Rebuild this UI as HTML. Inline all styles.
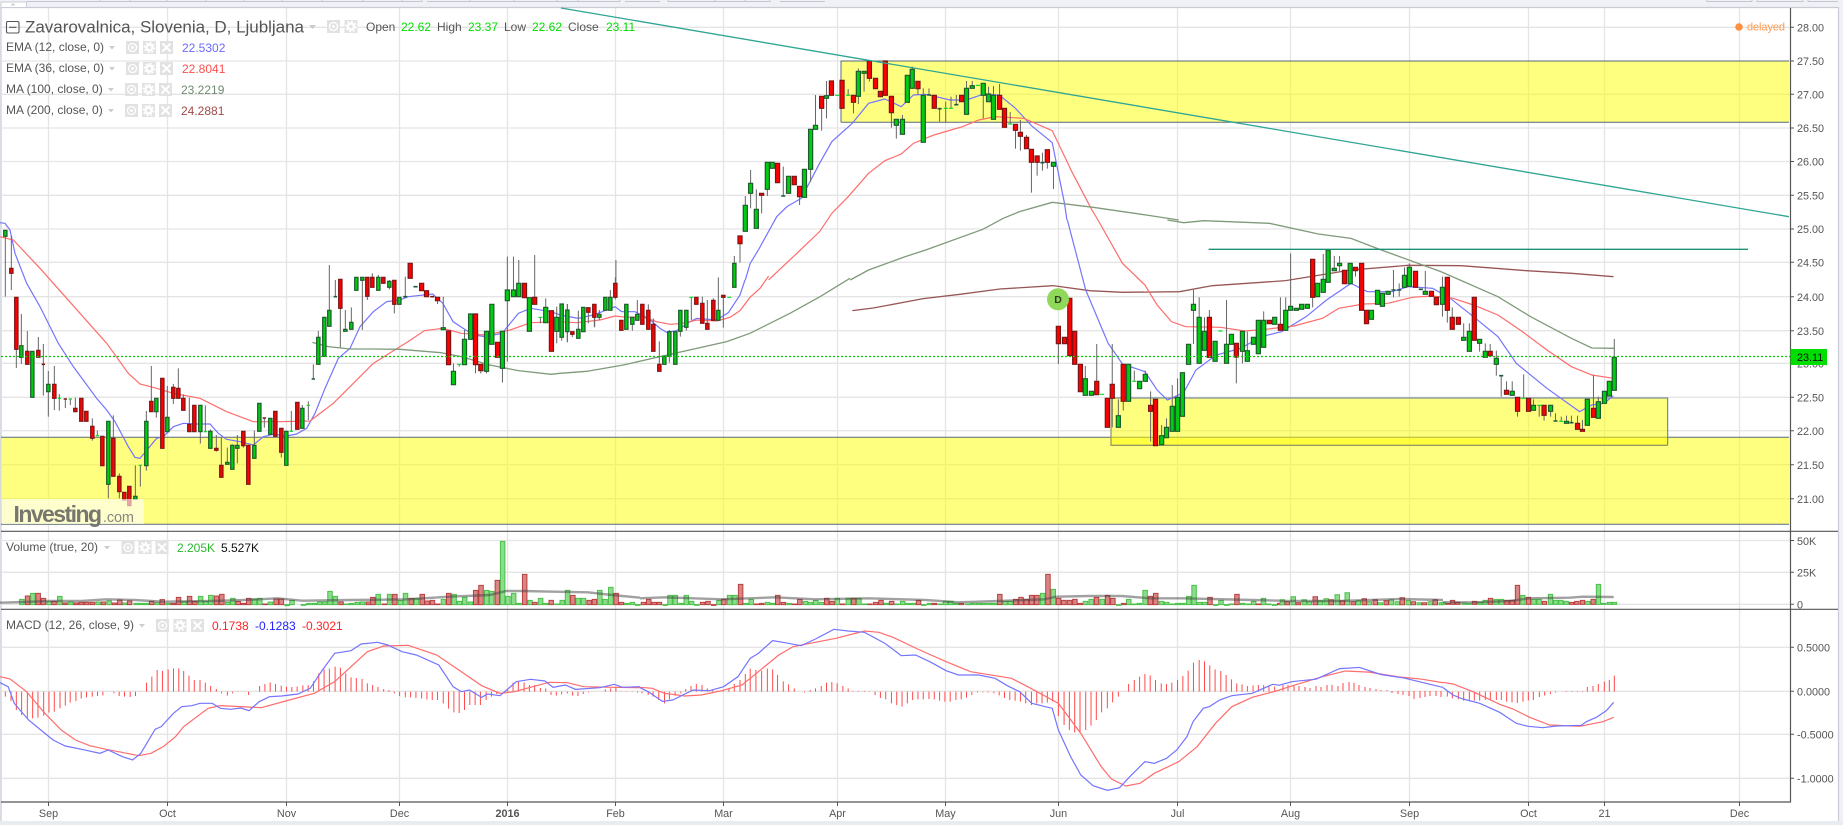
<!DOCTYPE html>
<html><head><meta charset="utf-8"><title>Zavarovalnica chart</title>
<style>
html,body{margin:0;padding:0;background:#eff1f6;overflow:hidden}
svg{display:block;font-family:"Liberation Sans",Arial,sans-serif}
svg *{vector-effect:non-scaling-stroke}
.w{fill:none;stroke:#666;stroke-width:1}
.g{fill:#0c1;stroke:#1d5a2c;stroke-width:1.2}
.r{fill:#f00;stroke:#7a1414;stroke-width:1.2}
.dg{fill:none;stroke:#0d2;stroke-width:1.2}
.dd{fill:none;stroke:#1d5a3c;stroke-width:1.6}
.dr{fill:none;stroke:#7a1414;stroke-width:1.6}
.ema1{fill:none;stroke:#7474ff;stroke-width:1.2}
.ema2{fill:none;stroke:#ff6c6c;stroke-width:1.2}
.ma1{fill:none;stroke:#7f9a7a;stroke-width:1.3}
.ma2{fill:none;stroke:#985656;stroke-width:1.3}
.vg{fill:#8cdc8c;stroke:#49c049;stroke-width:1}
.vr{fill:#da8585;stroke:#b84040;stroke-width:1}
.vm{fill:none;stroke:#444;stroke-opacity:.5;stroke-width:2.4}
.h{fill:none;stroke:#ff4a4a;stroke-width:1}
.l{font-size:12px;fill:#555}
.a{font-size:10.8px;fill:#555}
</style></head><body>
<svg width="1843" height="825" viewBox="0 0 1843 825" xmlns="http://www.w3.org/2000/svg">
<defs>
<g id="ie"><rect width="13" height="13" fill="#e2e2e2"/><circle cx="6.5" cy="6.5" r="4" fill="none" stroke="#fff" stroke-width="1.3"/><circle cx="6.5" cy="6.5" r="1.5" fill="#fff"/></g>
<g id="ig"><rect width="13" height="13" fill="#e2e2e2"/><circle cx="6.5" cy="6.5" r="3" fill="none" stroke="#fff" stroke-width="2.4"/><circle cx="6.5" cy="6.5" r="5" fill="none" stroke="#fff" stroke-width="1.6" stroke-dasharray="2 1.9"/></g>
<g id="ix"><rect width="13" height="13" fill="#e2e2e2"/><path d="M2.5 2.5L10.5 10.5M10.5 2.5L2.5 10.5" stroke="#fff" stroke-width="2"/></g>
</defs>
<rect width="1843" height="825" fill="#eff1f6"/>
<rect x="1" y="7" width="1837" height="814" fill="#fff"/>
<!-- top bar -->
<path d="M1 7.5H1838M1838.5 7V821M1 7V821" stroke="#c9ccd4" stroke-width="1.2" fill="none"/>
<rect x="1" y="2" width="25.500" height="5.500" fill="#fff" stroke="#c9ccd4"/>
<path d="M13 3l-2.500 2.500h5z" fill="#ccc"/>
<path d="M27 1.500H422M427 1.500H620M625 1.500H660M668 1.500H770M780 1.500H825M1707 1.500H1752M1757 1.500H1803M1808 1.500H1838" stroke="#c4c7cf" fill="none"/>
<path d="M100 0V2M130 0V2M167 0V2M206 0V2M244 0V2M282 0V2M322 0V2M363 0V2M402 0V2M422 0V2M470 0V2M514 0V2M557 0V2M578 0V2M620 0V2M668 0V2M715 0V2M745 0V2M770 0V2M1707 0V2M1752 0V2M1757 0V2M1803 0V2M1808 0V2" stroke="#c4c7cf" fill="none"/>
<!-- grid -->
<path d="M48.500 8V802M167.500 8V802M286.500 8V802M399.500 8V802M507.500 8V802M615.500 8V802M723.500 8V802M837.500 8V802M945.500 8V802M1058.500 8V802M1177.500 8V802M1290.500 8V802M1409.500 8V802M1528.500 8V802M1604.500 8V802M1739.500 8V802" stroke="#e5e5e5" stroke-width="1.300" fill="none"/>
<path d="M1 27.300H1790M1 61H1790M1 94.300H1790M1 128H1790M1 161.500H1790M1 195.300H1790M1 229H1790M1 262.300H1790M1 296.700H1790M1 330.700H1790M1 363.300H1790M1 397.300H1790M1 430.700H1790M1 464.700H1790M1 498.700H1790M1 540.500H1790M1 572.300H1790M1 604.300H1790M1 647.300H1790M1 691.300H1790M1 734.300H1790M1 778.300H1790" stroke="#e5e5e5" stroke-width="1.300" fill="none"/>
<!-- zones -->
<rect x="841" y="61" width="948" height="61.300" fill="#ff0" fill-opacity=".5"/>
<path d="M841 122.300V61H1789M841 122.300H1789" fill="none" stroke="#5a6c7a" stroke-width="1"/>
<rect x="1" y="437.300" width="1788" height="87" fill="#ff0" fill-opacity=".5"/>
<path d="M1 437.300H1789M1 524.300H1789" fill="none" stroke="#5a6c7a" stroke-width="1"/>
<rect x="1111" y="398" width="556.700" height="47.300" fill="#ff0" fill-opacity=".5"/>
<path d="M1111 398H1667.700V445.300" fill="none" stroke="#5f7590" stroke-width="1"/>
<path d="M1111 398V445.300H1667.700" fill="none" stroke="#9a9a60" stroke-width="1.300"/>
<!-- moving averages -->
<g transform="translate(0,220) scale(.33333)">
<polyline class="ema1" points="0,8 15,10 30,30 45,100 80,190 120,260 175,370 220,440 290,535 320,570 345,605 385,680 405,712 420,715 445,685 470,655 490,650 520,620 550,610 590,612 630,612 655,640 680,658 720,665 760,675 790,650 820,643 860,648 890,642 920,625 945,580 975,505 1015,415 1050,385 1080,320 1120,275 1160,245 1200,240"/>
<polyline class="ema2" points="0,50 40,60 120,145 200,235 280,325 320,370 385,460 420,492 470,505 520,520 600,535 680,575 760,605 840,605 930,603 1000,550 1050,500 1120,430 1200,380"/>
<polyline class="ma1" points="937,367 985,380 1050,387 1120,387 1200,388"/>
</g>
<g transform="translate(0,280) scale(.40816,.33333)">
<polyline class="ema1" points="980,60 1000,50 1060,42 1085,70 1110,125 1135,145 1160,165 1190,170 1230,160 1270,100 1300,85 1350,95 1372,105"/>
<polyline class="ema2" points="980,200 1000,185 1040,152 1085,145 1130,160 1190,165 1250,150 1300,128 1372,125"/>
<polyline class="ma1" points="980,208 1080,218 1130,230 1200,255 1270,272 1350,283 1372,280"/>
</g>
<g transform="translate(560,240) scale(.33333)">
<polyline class="ema1" points="0,225 55,235 100,225 140,210 165,200 185,215 225,215 265,235 300,265 320,277 350,272 390,245 410,235 470,240 505,218 540,165 555,120"/>
<polyline class="ema2" points="0,245 50,248 120,240 165,228 200,232 245,230 290,245 330,253 370,250 410,240 470,243 510,232 540,212 570,172 600,145 626,108"/>
<polyline class="ma1" points="0,400 80,394 190,375 300,350 500,305 570,280 690,220 780,170 870,115"/>
<polyline class="ma2" points="877,212 940,204 1090,176 1200,163 1320,147"/>
</g>
<g transform="translate(640,0) scale(.40816,.33333)">
<polyline class="ema1" points="258,840 270,790 290,750 335,650 360,620 395,595 440,490 470,425 520,370 560,310 600,297 640,320 670,285 700,283 760,300 800,300 840,283 880,285 920,325 960,378 1010,428 1040,610 1046,660"/>
<polyline class="ema2" points="315,840 380,765 440,695 470,640 510,590 560,520 600,482 640,462 670,430 720,405 790,380 830,360 870,350 940,355 1010,392 1060,520 1105,625 1122,660"/>
<polyline class="ma1" points="515,840 560,810 650,770 700,750 840,688 890,655 930,635 1010,607 1110,622 1240,645 1320,660"/>
</g>
<g transform="translate(1000,220) scale(.40816,.33333)">
<polyline class="ma2" points="0,207 130,197 220,212 300,217 440,215 520,197 700,182 860,150 1000,136 1130,137 1290,152 1400,160 1503,170"/>
<polyline class="ema1" points="165,0 210,210 265,370 300,432 355,455 385,510 410,540 450,518 480,450 530,405 590,385 640,350 690,335 750,290 800,240 860,190 900,215 960,215 1000,200 1060,205 1100,232 1160,290 1220,350 1265,430 1340,505 1420,575 1450,555 1480,550 1503,527"/>
<polyline class="ema2" points="240,0 300,130 355,195 385,255 420,305 455,320 540,322 600,333 650,328 720,318 790,295 830,265 890,252 950,250 1010,232 1060,228 1110,235 1160,255 1220,285 1280,335 1340,390 1400,440 1450,465 1503,475"/>
<polyline class="ma1" points="410,0 450,8 500,2 660,10 780,42 860,55 930,88 1080,155 1220,230 1300,290 1400,355 1450,384 1505,385"/>
</g>
<!-- candles A -->
<g transform="translate(0,220) scale(.33333)">
<path class="w" d="M16 30V230M34 48V210M49 232V444M64 282V432M82 333V433M97 394V532M115 351V412M130 372V527M145 453V590M163 438V570M178 522V572M196 535V564M211 537V555M226 533V575M277 595V662M292 632V648M325 604V835M340 586V655M358 760V835M406 736V830M421 736V800M439 573V752M454 438V544M469 535V593M502 498V592M520 492V552M535 445V535M550 523V571M568 533V613M601 635V671M616 556V635M631 628V634M649 645V695M664 652V736M682 683V727M697 673V676M712 645V730M730 677V683M763 632V676M793 596V623M844 697V713M874 573V634M907 555V565M925 544V600M940 433V477M955 333V352M988 135V271M1006 180V229M1021 265V382M1036 270V328M1054 262V307M1087 181V330M1102 229V240M1117 160V172M1135 165V172M1168 180V208M1183 253V280"/>
<path class="r" d="M34 145h5V160h-10V145zM49 232h5V388h-10V232zM82 394h5V433h-10V394zM115 391h5V412h-10V391zM163 493h5V535h-10V493zM226 565h5V575h-10V565zM244 535h5V604h-10V535zM259 574h5V604h-10V574zM277 619h5V655h-10V619zM307 649h5V737h-10V649zM340 655h5V769h-10V655zM358 769h5V815h-10V769zM373 817h5V840h-10V817zM388 799h5V857h-10V799zM454 544h5V575h-10V544zM487 475h5V685h-10V475zM520 502h5V535h-10V502zM535 505h5V535h-10V505zM550 535h5V571h-10V535zM568 613h5V635h-10V613zM583 556h5V635h-10V556zM649 685h5V691h-10V685zM664 736h5V772h-10V736zM730 634h5V677h-10V634zM745 676h5V793h-10V676zM826 574h5V649h-10V574zM844 625h5V697h-10V625zM892 547h5V628h-10V547zM1021 178h5V265h-10V178zM1102 172h5V229h-10V172zM1117 172h5V202h-10V172zM1150 172h5V190h-10V172zM1183 181h5V253h-10V181z"/>
<path class="g" d="M16 31h5V49h-10V31zM64 377h5V412h-10V377zM97 394h5V532h-10V394zM145 493h5V515h-10V493zM325 604h5V793h-10V604zM406 829h5V838h-10V829zM439 604h5V737h-10V604zM469 535h5V575h-10V535zM502 592h5V635h-10V592zM601 556h5V635h-10V556zM631 634h5V685h-10V634zM682 727h5V733h-10V727zM697 676h5V748h-10V676zM712 676h5V685h-10V676zM763 676h5V715h-10V676zM778 550h5V634h-10V550zM811 595h5V643h-10V595zM859 634h5V736h-10V634zM907 565h5V625h-10V565zM955 352h5V433h-10V352zM973 292h5V409h-10V292zM988 271h5V319h-10V271zM1036 328h5V334h-10V328zM1054 307h5V328h-10V307zM1069 172h5V211h-10V172zM1087 172h5V181h-10V172zM1135 172h5V211h-10V172zM1168 184h5V202h-10V184zM1198 232h5V253h-10V232z"/>
<path class="dg" d="M173 535h10M206 537h10M287 647h10M416 736h10M611 635h10M869 634h10M920 556h10"/>
<path class="dd" d="M935 477h10M1001 230h10"/>
<path class="dr" d="M125 433h10M191 537h10M788 594h10"/>
</g>
<!-- candles B -->
<g transform="translate(0,280) scale(.40816,.33333)">
<path class="w" d="M993 -10V50M1086 50V150M1072 62V72M1111 250V274M1125 253V260M1138 150V178M1165 254V280M1178 272V280M1192 274V280M1231 265V308M1243 -70V245M1258 -70V30M1271 -60V10M1310 -75V52M1324 112V130M1337 55V82M1364 80V190M1390 72V185M1457 112V140M1509 -60V10"/>
<path class="r" d="M1005 -50h5V-5h-10V-50zM1033 10h5V32h-10V10zM1045 32h5V50h-10V32zM1072 52h5V62h-10V52zM1099 153h5V254h-10V153zM1165 102h5V254h-10V102zM1178 253h5V272h-10V253zM1219 187h5V232h-10V187zM1285 10h5V53h-10V10zM1310 52h5V73h-10V52zM1351 92h5V214h-10V92z"/>
<path class="g" d="M1086 143h5V149h-10V143zM1111 274h5V314h-10V274zM1138 178h5V254h-10V178zM1153 102h5V178h-10V102zM1192 154h5V274h-10V154zM1205 73h5V193h-10V73zM1231 154h5V265h-10V154zM1243 30h5V62h-10V30zM1258 30h5V50h-10V30zM1271 10h5V50h-10V10zM1297 53h5V154h-10V53zM1337 82h5V128h-10V82zM1364 112h5V154h-10V112z"/>
<path class="dg" d="M1120 253h10M1319 112h10"/>
<path class="dd" d="M988 50h10M1013 20h10"/>
<path class="dr" d="M1054 50h10"/>
</g>
<!-- candles C -->
<g transform="translate(560,240) scale(.33333)">
<path class="w" d="M5 292V302M22 192V307M37 283V291M55 212V268M85 217V250M103 232V262M118 210V240M151 150V172M166 112V178M217 253V272M232 180V223M265 193V211M280 235V253M298 304V373M328 270V368M361 274V290M379 262V272M394 172V240M427 170V190M442 180V250M460 175V181M475 112V211M490 172V263M523 48V70"/>
<path class="r" d="M37 275h5V283h-10V275zM85 203h5V217h-10V203zM103 193h5V232h-10V193zM166 130h5V172h-10V130zM184 241h5V271h-10V241zM247 193h5V253h-10V193zM265 211h5V268h-10V211zM280 253h5V334h-10V253zM298 373h5V394h-10V373zM409 172h5V193h-10V172zM427 190h5V250h-10V190zM442 250h5V268h-10V250zM460 181h5V241h-10V181zM490 166h5V172h-10V166z"/>
<path class="g" d="M5 192h5V292h-10V192zM22 210h5V275h-10V210zM55 268h5V295h-10V268zM70 202h5V275h-10V202zM118 223h5V232h-10V223zM136 172h5V211h-10V172zM151 172h5V211h-10V172zM199 193h5V268h-10V193zM217 232h5V253h-10V232zM232 223h5V241h-10V223zM313 349h5V373h-10V349zM328 275h5V349h-10V275zM346 275h5V373h-10V275zM361 211h5V274h-10V211zM379 211h5V262h-10V211zM475 211h5V241h-10V211zM523 70h5V142h-10V70z"/>
<path class="dg" d="M388 172h12M502 172h12"/>
</g>
<!-- candles D -->
<g transform="translate(640,0) scale(.40816,.33333)">
<path class="w" d="M245 731V788M258 588V616M271 510V625M285 568V628M298 586V640M312 568V588M351 500V588M391 590V615M418 508V545M430 285V376M445 325V392M457 243V355M510 267V286M523 307V340M535 205V312M549 220V275M562 235V245M616 338V383M628 376V416M643 345V358M667 200V208M681 266V285M694 265V286M708 265V285M734 326V365M749 305V367M762 290V325M775 285V314M800 243V265M814 243V257M841 286V355M854 260V282M866 258V286M881 252V286M907 336V372M920 391V446M932 360V452M947 405V412M959 487V578M973 487V527M986 458V512M998 487V506M1013 499V567"/>
<path class="r" d="M245 708h5V731h-10V708zM298 580h5V586h-10V580zM337 490h5V548h-10V490zM378 529h5V554h-10V529zM391 559h5V590h-10V559zM445 289h5V325h-10V289zM469 243h5V286h-10V243zM495 241h5V325h-10V241zM523 286h5V307h-10V286zM562 183h5V235h-10V183zM577 235h5V266h-10V235zM589 274h5V290h-10V274zM601 183h5V286h-10V183zM616 289h5V338h-10V289zM681 244h5V266h-10V244zM721 286h5V325h-10V286zM788 286h5V305h-10V286zM881 286h5V328h-10V286zM893 325h5V382h-10V325zM920 373h5V391h-10V373zM932 397h5V409h-10V397zM947 412h5V446h-10V412zM959 448h5V487h-10V448zM973 468h5V487h-10V468zM998 449h5V487h-10V449z"/>
<path class="g" d="M258 616h5V694h-10V616zM271 550h5V580h-10V550zM285 628h5V685h-10V628zM312 487h5V568h-10V487zM324 487h5V505h-10V487zM364 529h5V580h-10V529zM403 508h5V592h-10V508zM418 388h5V508h-10V388zM430 376h5V388h-10V376zM457 287h5V295h-10V287zM535 214h5V289h-10V214zM549 214h5V220h-10V214zM628 358h5V376h-10V358zM643 358h5V403h-10V358zM655 226h5V307h-10V226zM667 208h5V265h-10V208zM694 286h5V427h-10V286zM800 265h5V343h-10V265zM814 257h5V265h-10V257zM841 250h5V286h-10V250zM854 282h5V305h-10V282zM866 286h5V358h-10V286zM1013 487h5V499h-10V487z"/>
<path class="dg" d="M478 286h10M505 286h10M744 325h10M757 325h10M823 256h10M902 372h10"/>
<path class="dd" d="M346 588h10M703 285h10M729 326h10M770 314h10M981 488h10"/>
</g>
<!-- candles E -->
<g transform="translate(1000,220) scale(.40816,.33333)">
<path class="w" d="M143 371V432M209 438V476M237 372V484M275 372V622M290 538V587M302 544V572M329 452V484M356 452V463M369 514V665M396 615V647M408 595V622M422 495V559M435 475V532M474 210V372M488 232V292M501 292V334M513 270V292M555 240V373M579 411V490M594 394V430M606 335V392M646 274V301M687 232V313M700 232V271M712 100V259M766 232V262M792 102V178M819 108V145M832 108V155M871 152V170M964 150V232M978 190V230M991 142V166M1003 130V142M1042 153V214M1084 170V290M1096 271V308M1108 262V292M1136 310V352M1150 310V334M1175 370V395M1189 370V394M1201 372V394M1216 392V467M1228 467V530M1241 484V511M1255 484V514M1268 574V590M1283 463V535M1307 538V556M1321 556V590M1333 586V602M1349 574V590M1361 580V603M1375 590V604M1388 587V604M1400 587V608M1415 587V610M1427 600V628M1454 466V565M1466 530V545M1505 357V412"/>
<path class="r" d="M143 319h5V371h-10V319zM158 352h5V371h-10V352zM171 235h5V407h-10V235zM183 334h5V433h-10V334zM197 433h5V515h-10V433zM237 484h5V524h-10V484zM263 535h5V622h-10V535zM275 493h5V535h-10V493zM302 433h5V544h-10V433zM369 556h5V574h-10V556zM381 538h5V677h-10V538zM513 292h5V412h-10V292zM579 370h5V411h-10V370zM660 301h5V311h-10V301zM687 313h5V331h-10V313zM766 118h5V232h-10V118zM844 151h5V191h-10V151zM871 142h5V152h-10V142zM886 130h5V271h-10V130zM898 271h5V311h-10V271zM1018 154h5V202h-10V154zM1057 214h5V229h-10V214zM1069 232h5V254h-10V232zM1096 172h5V271h-10V172zM1108 292h5V328h-10V292zM1123 292h5V313h-10V292zM1162 232h5V361h-10V232zM1201 394h5V407h-10V394zM1241 511h5V523h-10V511zM1268 532h5V574h-10V532zM1295 535h5V574h-10V535zM1333 556h5V586h-10V556zM1415 610h5V628h-10V610zM1427 628h5V634h-10V628zM1454 565h5V592h-10V565z"/>
<path class="g" d="M209 476h5V526h-10V476zM224 514h5V526h-10V514zM290 587h5V622h-10V587zM315 433h5V544h-10V433zM342 484h5V506h-10V484zM356 463h5V484h-10V463zM396 647h5V674h-10V647zM408 622h5V653h-10V622zM422 559h5V634h-10V559zM435 532h5V634h-10V532zM447 458h5V589h-10V458zM462 373h5V433h-10V373zM474 253h5V271h-10V253zM488 292h5V430h-10V292zM501 334h5V391h-10V334zM527 364h5V424h-10V364zM555 373h5V430h-10V373zM567 343h5V373h-10V343zM594 334h5V394h-10V334zM606 392h5V424h-10V392zM621 352h5V373h-10V352zM633 301h5V401h-10V301zM646 301h5V382h-10V301zM673 292h5V313h-10V292zM700 271h5V331h-10V271zM712 259h5V271h-10V259zM726 265h5V271h-10V265zM739 253h5V268h-10V253zM753 253h5V265h-10V253zM778 190h5V230h-10V190zM792 178h5V217h-10V178zM804 90h5V187h-10V90zM819 145h5V152h-10V145zM832 130h5V137h-10V130zM858 130h5V191h-10V130zM910 271h5V298h-10V271zM925 211h5V253h-10V211zM937 220h5V259h-10V220zM951 214h5V223h-10V214zM991 166h5V202h-10V166zM1003 142h5V199h-10V142zM1042 214h5V223h-10V214zM1084 202h5V253h-10V202zM1136 352h5V361h-10V352zM1150 334h5V394h-10V334zM1175 358h5V370h-10V358zM1189 394h5V412h-10V394zM1216 415h5V433h-10V415zM1255 514h5V526h-10V514zM1307 556h5V571h-10V556zM1349 556h5V574h-10V556zM1388 604h5V610h-10V604zM1439 538h5V616h-10V538zM1466 545h5V595h-10V545zM1481 514h5V550h-10V514zM1493 484h5V528h-10V484zM1505 412h5V511h-10V412z"/>
<path class="dg" d="M245 523h10M324 484h10M535 333h10M1278 535h10M1316 556h10M1370 604h10"/>
<path class="dd" d="M959 210h10M973 210h10M1026 208h10M1223 467h10M1356 603h10M1395 608h10"/>
</g>
<!-- price / trend lines -->
<path d="M561 8L1789 216.700" stroke="#2fa593" stroke-width="1.300" fill="none"/>
<path d="M1208.600 249.300H1748" stroke="#1f9078" stroke-width="1.300" fill="none"/>
<path d="M1 356.500H1790" stroke="#0c0" stroke-width="1.200" stroke-dasharray="2 2" fill="none"/>
<circle cx="1058" cy="299.300" r="11" fill="#8fd85a"/>
<text x="1058" y="303" text-anchor="middle" font-size="10.500" font-weight="bold" fill="#2b3a1b">D</text>
<circle cx="1739" cy="27" r="3.800" fill="#ff9040"/>
<text x="1747" y="30.500" font-size="11" fill="#ff9a50" textLength="38">delayed</text>
<!-- logo -->
<rect x="2" y="499" width="142" height="25" fill="#fff" fill-opacity=".62"/>
<text x="13.500" y="522" font-size="23" font-weight="bold" fill="#77776f" textLength="88.500">Investing</text>
<text x="103" y="522" font-size="14.500" fill="#86867e" textLength="31">.com</text>
<!-- volume -->
<g transform="translate(0,540) scale(.40816,.33333)">
<path class="vg" d="M48 178h11V194h-11zM75 160h11V194h-11zM115 185h11V194h-11zM141 169h11V194h-11zM168 186h11V194h-11zM235 186h11V194h-11zM262 183h11V194h-11zM301 189h11V194h-11zM328 190h11V194h-11zM341 190h11V194h-11zM353 190h11V194h-11zM380 188h11V194h-11zM406 190h11V194h-11zM446 185h11V194h-11zM486 169h11V194h-11zM499 184h11V194h-11zM511 166h11V194h-11zM552 187h11V194h-11zM565 175h11V194h-11zM618 177h11V194h-11zM631 175h11V194h-11zM657 186h11V194h-11zM698 197h11V194h-11zM710 181h11V194h-11zM738 196h11V194h-11zM751 190h11V194h-11zM765 190h11V194h-11zM778 186h11V194h-11zM790 186h11V194h-11zM803 154h11V194h-11zM816 169h11V194h-11zM843 192h11V194h-11zM856 190h11V194h-11zM870 187h11V194h-11zM883 186h11V194h-11zM921 163h11V194h-11zM949 163h11V194h-11zM976 182h11V194h-11zM988 160h11V194h-11zM1015 175h11V194h-11zM1081 178h11V194h-11zM1107 163h11V194h-11zM1120 184h11V194h-11zM1133 172h11V194h-11zM1147 186h11V194h-11zM1187 151h11V194h-11zM1199 154h11V194h-11zM1226 4h11V194h-11zM1239 169h11V194h-11zM1253 160h11V194h-11zM1266 190h11V194h-11zM1293 181h11V194h-11zM1319 175h11V194h-11zM1332 190h11V194h-11zM1359 192h11V194h-11zM1372 181h11V194h-11zM1385 151h11V194h-11zM1411 175h11V194h-11zM1424 175h11V194h-11zM1464 151h11V194h-11zM1477 178h11V194h-11zM1491 142h11V194h-11zM1530 190h11V194h-11zM1544 187h11V194h-11zM1557 196h11V194h-11z"/>
<path class="vr" d="M62 168h11V194h-11zM88 160h11V194h-11zM101 175h11V194h-11zM127 184h11V194h-11zM154 189h11V194h-11zM181 189h11V194h-11zM194 187h11V194h-11zM207 187h11V194h-11zM221 187h11V194h-11zM248 186h11V194h-11zM275 189h11V194h-11zM288 180h11V194h-11zM312 183h11V194h-11zM366 184h11V194h-11zM392 179h11V194h-11zM419 190h11V194h-11zM432 172h11V194h-11zM459 169h11V194h-11zM472 184h11V194h-11zM525 168h11V194h-11zM538 163h11V194h-11zM578 184h11V194h-11zM591 190h11V194h-11zM604 175h11V194h-11zM644 192h11V194h-11zM671 177h11V194h-11zM684 177h11V194h-11zM830 186h11V194h-11zM897 186h11V194h-11zM908 172h11V194h-11zM936 192h11V194h-11zM962 163h11V194h-11zM1002 175h11V194h-11zM1029 163h11V194h-11zM1041 183h11V194h-11zM1054 181h11V194h-11zM1067 192h11V194h-11zM1094 160h11V194h-11zM1160 151h11V194h-11zM1173 136h11V194h-11zM1213 121h11V194h-11zM1280 103h11V194h-11zM1305 187h11V194h-11zM1345 181h11V194h-11zM1398 166h11V194h-11zM1438 181h11V194h-11zM1451 178h11V194h-11zM1504 160h11V194h-11zM1517 187h11V194h-11z"/>
<polyline class="vm" points="0,188 60,186 120,183 200,183 260,178 330,180 400,185 520,183 600,180 680,175 740,182 860,180 1000,178 1100,170 1200,165 1240,153 1280,153 1360,155 1440,157 1500,165 1568,173"/>
</g>
<g transform="translate(640,540) scale(.40816,.33333)">
<path class="vg" d="M56 196h11V194h-11zM68 166h11V194h-11zM81 166h11V194h-11zM95 190h11V194h-11zM108 166h11V194h-11zM121 184h11V194h-11zM134 196h11V194h-11zM188 181h11V194h-11zM214 166h11V194h-11zM227 166h11V194h-11zM254 190h11V194h-11zM267 178h11V194h-11zM307 187h11V194h-11zM320 190h11V194h-11zM360 190h11V194h-11zM400 184h11V194h-11zM412 187h11V194h-11zM425 181h11V194h-11zM439 187h11V194h-11zM478 175h11V194h-11zM505 175h11V194h-11zM531 175h11V194h-11zM545 192h11V194h-11zM598 190h11V194h-11zM624 192h11V194h-11zM638 184h11V194h-11zM651 190h11V194h-11zM664 190h11V194h-11zM690 196h11V194h-11zM704 190h11V194h-11zM730 192h11V194h-11zM743 184h11V194h-11zM756 184h11V194h-11zM769 190h11V194h-11zM797 192h11V194h-11zM810 190h11V194h-11zM824 190h11V194h-11zM836 190h11V194h-11zM850 190h11V194h-11zM863 190h11V194h-11zM889 184h11V194h-11zM902 184h11V194h-11zM981 160h11V194h-11zM1007 148h11V194h-11zM1086 184h11V194h-11zM1100 178h11V194h-11zM1127 178h11V194h-11zM1167 196h11V194h-11zM1192 178h11V194h-11zM1205 192h11V194h-11zM1218 190h11V194h-11zM1232 151h11V194h-11zM1272 184h11V194h-11zM1285 187h11V194h-11zM1299 192h11V194h-11zM1312 190h11V194h-11zM1325 190h11V194h-11zM1339 169h11V194h-11zM1352 136h11V194h-11zM1365 187h11V194h-11zM1378 187h11V194h-11zM1405 196h11V194h-11zM1418 181h11V194h-11zM1432 196h11V194h-11zM1444 192h11V194h-11zM1471 190h11V194h-11zM1485 192h11V194h-11zM1498 184h11V194h-11zM1522 175h11V194h-11zM1535 192h11V194h-11zM1549 196h11V194h-11z"/>
<path class="vr" d="M3 187h11V194h-11zM16 178h11V194h-11zM29 187h11V194h-11zM42 187h11V194h-11zM148 187h11V194h-11zM161 184h11V194h-11zM175 196h11V194h-11zM200 178h11V194h-11zM241 133h11V194h-11zM280 192h11V194h-11zM293 190h11V194h-11zM332 166h11V194h-11zM346 187h11V194h-11zM373 192h11V194h-11zM386 178h11V194h-11zM452 175h11V194h-11zM465 184h11V194h-11zM491 192h11V194h-11zM518 175h11V194h-11zM558 192h11V194h-11zM572 187h11V194h-11zM585 181h11V194h-11zM611 184h11V194h-11zM677 181h11V194h-11zM716 190h11V194h-11zM782 190h11V194h-11zM876 163h11V194h-11zM915 178h11V194h-11zM928 172h11V194h-11zM941 178h11V194h-11zM954 166h11V194h-11zM967 166h11V194h-11zM994 103h11V194h-11zM1020 175h11V194h-11zM1033 181h11V194h-11zM1047 181h11V194h-11zM1060 178h11V194h-11zM1073 190h11V194h-11zM1113 172h11V194h-11zM1140 166h11V194h-11zM1153 175h11V194h-11zM1180 190h11V194h-11zM1245 169h11V194h-11zM1258 160h11V194h-11zM1391 172h11V194h-11zM1457 163h11V194h-11zM1510 192h11V194h-11zM1562 190h11V194h-11z"/>
<polyline class="vm" points="0,175 60,172 200,178 330,172 430,178 560,175 700,180 780,187 880,183 990,178 1020,170 1100,168 1180,168 1250,175 1330,175 1500,180 1568,182"/>
</g>
<path class="vg" d="M1280 599.700h4.500V604.700h-4.500zM1291 596.700h4.500V604.700h-4.500zM1302 599.700h4.500V604.700h-4.500zM1307 601.700h4.500V604.700h-4.500zM1318 600.700h4.500V604.700h-4.500zM1324 598.700h4.500V604.700h-4.500zM1335 594.700h4.500V604.700h-4.500zM1345 592.700h4.500V604.700h-4.500zM1356 600.700h4.500V604.700h-4.500zM1367 601.700h4.500V604.700h-4.500zM1378 602.700h4.500V604.700h-4.500zM1389 599.700h4.500V604.700h-4.500zM1395 601.700h4.500V604.700h-4.500zM1406 600.700h4.500V604.700h-4.500zM1417 602.700h4.500V604.700h-4.500zM1428 601.700h4.500V604.700h-4.500zM1439 602.700h4.500V604.700h-4.500z"/>
<path class="vr" d="M1285 601.700h4.500V604.700h-4.500zM1296 602.700h4.500V604.700h-4.500zM1313 596.700h4.500V604.700h-4.500zM1329 599.700h4.500V604.700h-4.500zM1340 600.700h4.500V604.700h-4.500zM1351 601.700h4.500V604.700h-4.500zM1362 598.700h4.500V604.700h-4.500zM1373 599.700h4.500V604.700h-4.500zM1384 600.700h4.500V604.700h-4.500zM1400 597.700h4.500V604.700h-4.500zM1411 601.700h4.500V604.700h-4.500zM1422 602.700h4.500V604.700h-4.500zM1433 599.700h4.500V604.700h-4.500z"/>
<polyline class="vm" points="1280,601 1340,601 1400,599 1443,600"/>
<g transform="translate(1443,545) scale(.33333)">
<path class="vg" d="M-4 172h13V178h-13zM57 174h13V178h-13zM72 176h13V178h-13zM104 172h13V178h-13zM120 166h13V178h-13zM153 163h13V178h-13zM169 163h13V178h-13zM233 151h13V178h-13zM266 163h13V178h-13zM282 163h13V178h-13zM316 148h13V178h-13zM332 166h13V178h-13zM347 166h13V178h-13zM363 169h13V178h-13zM428 169h13V178h-13zM460 118h13V178h-13zM476 175h13V178h-13zM493 172h13V178h-13zM508 172h13V178h-13z"/>
<path class="vr" d="M9 176h13V178h-13zM22 166h13V178h-13zM38 172h13V178h-13zM88 169h13V178h-13zM136 160h13V178h-13zM185 166h13V178h-13zM201 166h13V178h-13zM217 121h13V178h-13zM250 157h13V178h-13zM298 169h13V178h-13zM379 172h13V178h-13zM395 169h13V178h-13zM412 166h13V178h-13zM444 163h13V178h-13z"/>
<polyline class="vm" points="0,172 100,172 200,168 260,160 380,158 420,155 512,156"/>
</g>
<!-- MACD -->
<g transform="translate(0,540) scale(.40816,.33333)">
<path class="h" d="M13 455V470M27 455V483M40 455V510M53 455V525M67 455V535M80 455V535M93 455V533M107 455V527M120 455V518M133 455V515M147 455V505M160 455V497M172 455V488M186 455V483M199 455V476M212 455V472M226 455V470M239 455V468M252 455V466M279 455V460M292 455V468M305 455V470M319 455V471M332 455V468M345 455V454M359 455V428M372 455V410M385 455V390M398 455V393M412 455V388M425 455V385M438 455V385M450 455V393M463 455V407M476 455V420M490 455V420M503 455V428M516 455V438M530 455V447M543 455V460M557 455V467M570 455V460M583 455V456M609 455V465M636 455V438M649 455V432M662 455V427M675 455V432M689 455V437M702 455V440M715 455V441M728 455V440M742 455V436M755 455V435M768 455V424M781 455V400M794 455V388M807 455V386M821 455V380M834 455V383M847 455V400M860 455V412M873 455V414M887 455V417M900 455V430M913 455V435M926 455V441M940 455V447M953 455V450M966 455V460M979 455V468M993 455V472M1006 455V472M1019 455V474M1033 455V476M1046 455V478M1059 455V480M1072 455V480M1086 455V490M1099 455V506M1112 455V517M1125 455V519M1138 455V510M1151 455V495M1164 455V495M1177 455V495M1191 455V480M1204 455V470M1217 455V462M1244 455V450M1257 455V428M1270 455V425M1284 455V427M1297 455V435M1310 455V435M1324 455V444M1337 455V445M1350 455V465M1363 455V467M1376 455V463M1390 455V460M1403 455V467M1416 455V468M1429 455V462M1442 455V457M1483 455V448M1496 455V445M1509 455V440M1522 455V456M1535 455V456M1549 455V456M1562 455V458"/>
<polyline class="ema2" points="0,410 25,417 65,455 110,520 150,570 185,600 220,617 260,628 340,647 370,640 400,620 430,590 450,560 510,505 540,497 640,503 700,483 770,460 820,425 860,380 900,335 940,318 1000,316 1070,345 1130,395 1180,437 1225,460 1260,455 1345,427 1390,428 1430,440 1500,442 1568,443"/>
<polyline class="ema1" points="0,428 20,440 35,490 70,540 100,570 130,600 160,618 200,628 245,640 265,630 300,650 325,660 345,640 380,568 395,560 425,520 445,500 470,497 490,490 520,490 540,505 565,508 590,504 610,512 635,485 660,470 690,468 730,462 760,445 790,390 820,340 860,332 885,312 925,307 950,315 985,335 1020,345 1075,375 1110,440 1130,455 1150,450 1180,472 1195,462 1225,467 1265,425 1300,418 1335,423 1355,442 1385,435 1410,448 1470,443 1505,433 1525,442 1568,440"/>
</g>
<g transform="translate(640,540) scale(.40816,.33333)">
<path class="h" d="M5 455V460M20 455V465M32 455V470M46 455V480M60 455V490M72 455V478M86 455V467M100 455V460M112 455V447M125 455V438M138 455V432M152 455V435M165 455V445M178 455V450M191 455V452M204 455V452M218 455V445M231 455V432M245 455V420M258 455V402M270 455V386M284 455V390M298 455V392M312 455V386M325 455V388M337 455V405M351 455V424M364 455V433M378 455V445M403 455V458M417 455V450M430 455V445M444 455V438M457 455V428M470 455V426M483 455V430M497 455V438M510 455V445M522 455V453M535 455V453M550 455V453M562 455V456M576 455V465M589 455V474M602 455V478M616 455V490M629 455V495M642 455V500M655 455V490M668 455V480M681 455V478M694 455V478M708 455V477M721 455V478M734 455V482M747 455V485M760 455V485M774 455V480M787 455V478M800 455V473M813 455V465M827 455V458M840 455V457M853 455V458M867 455V460M880 455V466M893 455V474M906 455V480M919 455V482M932 455V485M945 455V490M959 455V495M972 455V490M985 455V490M998 455V488M1011 455V485M1025 455V528M1039 455V555M1052 455V570M1065 455V577M1078 455V577M1092 455V570M1105 455V557M1118 455V540M1131 455V517M1145 455V505M1158 455V487M1172 455V470M1197 455V432M1211 455V420M1224 455V410M1237 455V402M1250 455V406M1263 455V420M1277 455V430M1290 455V432M1303 455V428M1317 455V420M1330 455V408M1343 455V392M1356 455V368M1370 455V360M1383 455V364M1396 455V376M1409 455V388M1423 455V393M1436 455V405M1449 455V418M1462 455V430M1475 455V433M1488 455V438M1502 455V436M1515 455V435M1528 455V435M1541 455V438M1555 455V440"/>
<polyline class="ema2" points="0,442 30,445 60,460 110,468 150,465 200,452 250,435 290,395 340,345 375,320 480,295 550,273 585,277 620,292 680,327 750,365 810,395 910,415 950,440 1025,490 1080,580 1130,680 1155,717 1190,738 1225,730 1260,700 1320,665 1365,620 1410,550 1450,500 1500,472 1568,450"/>
<polyline class="ema1" points="0,443 20,455 55,484 80,480 130,450 170,452 205,440 240,410 270,355 290,340 325,302 350,307 395,317 430,297 475,268 510,273 550,277 600,310 640,347 675,345 710,365 750,392 780,405 830,405 870,415 900,437 930,455 960,490 1010,505 1025,570 1055,650 1080,705 1110,737 1145,751 1175,743 1200,710 1237,665 1260,670 1290,655 1315,630 1340,590 1355,545 1380,505 1395,500 1420,480 1450,467 1500,460 1550,433 1568,436"/>
</g>
<path class="h" d="M1283 691V685M1288 691V685M1294 691V685M1299 691V686M1305 691V687M1310 691V688M1316 691V686M1321 691V687M1327 691V685M1332 691V685M1338 691V686M1343 691V683M1349 691V682M1354 691V683M1359 691V685M1365 691V687M1370 691V688M1376 691V689M1381 691V690M1387 691V690M1392 691V693M1398 691V694M1403 691V695M1409 691V696M1414 691V699M1420 691V698M1425 691V697M1430 691V696M1436 691V696M1441 691V697"/>
<g transform="scale(1.17509)">
<polyline class="ema2" points="1089,587 1105,582 1125,576 1145,571 1165,572 1190,576 1210,578 1228,581"/>
<polyline class="ema1" points="1089,583 1100,580 1120,578 1140,569 1157,568 1175,574 1195,577 1228,585"/>
</g>
<g transform="translate(1443,545) scale(.33333)">
<path class="h" d="M13 440V455M28 440V460M46 440V463M62 440V467M79 440V467M94 440V467M110 440V467M127 440V465M142 440V465M160 440V465M175 440V465M191 440V470M207 440V472M223 440V474M240 440V470M256 440V467M271 440V465M289 440V456M305 440V452M322 440V447M338 440V443M370 440V438M387 440V438M403 440V438M418 440V438M433 440V426M450 440V423M466 440V417M484 440V410M499 440V405M514 440V392"/>
<polyline class="ema2" points="0,412 30,417 90,440 170,478 210,492 260,517 320,540 410,544 480,530 512,517"/>
<polyline class="ema1" points="0,428 30,450 60,462 110,475 170,502 220,535 255,544 300,548 340,543 415,541 430,530 460,517 490,497 512,472"/>
</g>
<!-- pane borders -->
<path d="M1 531.300H1838M1 609.300H1838" stroke="#555" stroke-width="1.200" fill="none"/>
<path d="M1790.500 8V802.500M1 802H1791" stroke="#555" stroke-width="1.200" fill="none"/>
<path d="M48.500 802V806M167.500 802V806M286.500 802V806M399.500 802V806M507.500 802V806M615.500 802V806M723.500 802V806M837.500 802V806M945.500 802V806M1058.500 802V806M1177.500 802V806M1290.500 802V806M1409.500 802V806M1528.500 802V806M1604.500 802V806M1739.500 802V806" stroke="#555" fill="none"/>
<path d="M1790 27.300h4M1790 61h4M1790 94.300h4M1790 128h4M1790 161.500h4M1790 195.300h4M1790 229h4M1790 262.300h4M1790 296.700h4M1790 330.700h4M1790 397.300h4M1790 430.700h4M1790 464.700h4M1790 498.700h4M1790 540.500h4M1790 572.300h4M1790 604.300h4M1790 647.300h4M1790 691.300h4M1790 734.300h4M1790 778.300h4" stroke="#555" fill="none"/>
<rect x="0" y="821" width="1843" height="4" fill="#e8ebf0"/>
<!-- legend -->
<rect x="6.500" y="21.500" width="12.500" height="11.500" rx="1.500" fill="none" stroke="#555" stroke-width="1.100"/>
<path d="M9 27.300H16.500" stroke="#555" stroke-width="1.100"/>
<text x="25" y="32.700" font-size="17" fill="#555" textLength="279">Zavarovalnica, Slovenia, D, Ljubljana</text>
<path d="M309 25h7l-3.500 4z" fill="#ccc"/>
<use href="#ie" x="327" y="20"/><use href="#ig" x="344.500" y="20"/>
<text x="366" y="31" class="l">Open</text><text x="401" y="31" font-size="12" fill="#0d0">22.62</text>
<text x="437" y="31" class="l">High</text><text x="468" y="31" font-size="12" fill="#0d0">23.37</text>
<text x="504" y="31" class="l">Low</text><text x="532" y="31" font-size="12" fill="#0d0">22.62</text>
<text x="568" y="31" class="l">Close</text><text x="606" y="31" font-size="12" fill="#0d0">23.11</text>
<text x="6" y="51" class="l">EMA (12, close, 0)</text><path d="M109 46h6l-3 3.500z" fill="#ccc"/>
<use href="#ie" x="126" y="41"/><use href="#ig" x="143" y="41"/><use href="#ix" x="160" y="41"/>
<text x="182" y="52" font-size="12" fill="#6a6aff">22.5302</text>
<text x="6" y="72" class="l">EMA (36, close, 0)</text><path d="M109 67h6l-3 3.500z" fill="#ccc"/>
<use href="#ie" x="126" y="62"/><use href="#ig" x="143" y="62"/><use href="#ix" x="160" y="62"/>
<text x="182" y="73" font-size="12" fill="#ff4d4d">22.8041</text>
<text x="6" y="93" class="l">MA (100, close, 0)</text><path d="M108 88h6l-3 3.500z" fill="#ccc"/>
<use href="#ie" x="125" y="83"/><use href="#ig" x="142" y="83"/><use href="#ix" x="159" y="83"/>
<text x="181" y="94" font-size="12" fill="#6f8b6f">23.2219</text>
<text x="6" y="114" class="l">MA (200, close, 0)</text><path d="M108 109h6l-3 3.500z" fill="#ccc"/>
<use href="#ie" x="125" y="104"/><use href="#ig" x="142" y="104"/><use href="#ix" x="159" y="104"/>
<text x="181" y="115" font-size="12" fill="#a04a4a">24.2881</text>
<text x="6" y="551" class="l">Volume (true, 20)</text><path d="M104 546h6l-3 3.500z" fill="#ccc"/>
<use href="#ie" x="121.500" y="541"/><use href="#ig" x="138.500" y="541"/><use href="#ix" x="155.500" y="541"/>
<text x="177" y="552" font-size="12" fill="#2db82d">2.205K</text><text x="221" y="552" font-size="12" fill="#111">5.527K</text>
<text x="6" y="629" class="l">MACD (12, 26, close, 9)</text><path d="M139 624h6l-3 3.500z" fill="#ccc"/>
<use href="#ie" x="156" y="619"/><use href="#ig" x="173.500" y="619"/><use href="#ix" x="191" y="619"/>
<text x="212" y="630" font-size="12" fill="#f22">0.1738</text><text x="255" y="630" font-size="12" fill="#22f">-0.1283</text><text x="302" y="630" font-size="12" fill="#f22">-0.3021</text>
<!-- y axis -->
<g class="a">
<text x="1797" y="31.500" class="a">28.00</text><text x="1797" y="65.200" class="a">27.50</text><text x="1797" y="98.500" class="a">27.00</text><text x="1797" y="132.200" class="a">26.50</text><text x="1797" y="165.700" class="a">26.00</text><text x="1797" y="199.500" class="a">25.50</text><text x="1797" y="233.200" class="a">25.00</text><text x="1797" y="266.500" class="a">24.50</text><text x="1797" y="300.900" class="a">24.00</text><text x="1797" y="334.900" class="a">23.50</text><text x="1797" y="367.500" class="a">23.00</text><text x="1797" y="401.500" class="a">22.50</text><text x="1797" y="434.900" class="a">22.00</text><text x="1797" y="468.900" class="a">21.50</text><text x="1797" y="502.900" class="a">21.00</text>
<text x="1797" y="545" class="a">50K</text><text x="1797" y="576.700" class="a">25K</text><text x="1797" y="608.500" class="a">0</text>
<text x="1797" y="651.700" class="a">0.5000</text><text x="1797" y="695.700" class="a">0.0000</text><text x="1797" y="738.700" class="a">-0.5000</text><text x="1797" y="782.700" class="a">-1.0000</text>
</g>
<rect x="1790.500" y="349" width="36.500" height="16" fill="#00dd00"/>
<text x="1797" y="361" font-size="10.800" fill="#111">23.11</text>
<!-- x axis -->
<g text-anchor="middle">
<text x="48.500" y="817" class="a">Sep</text><text x="167.500" y="817" class="a">Oct</text><text x="286.500" y="817" class="a">Nov</text><text x="399.500" y="817" class="a">Dec</text><text x="507.500" y="817" class="a" font-weight="bold">2016</text><text x="615.500" y="817" class="a">Feb</text><text x="723.500" y="817" class="a">Mar</text><text x="837.500" y="817" class="a">Apr</text><text x="945.500" y="817" class="a">May</text><text x="1058.500" y="817" class="a">Jun</text><text x="1177.500" y="817" class="a">Jul</text><text x="1290.500" y="817" class="a">Aug</text><text x="1409.500" y="817" class="a">Sep</text><text x="1528.500" y="817" class="a">Oct</text><text x="1604.500" y="817" class="a">21</text><text x="1739.500" y="817" class="a">Dec</text>
</g>
</svg>
</body></html>
